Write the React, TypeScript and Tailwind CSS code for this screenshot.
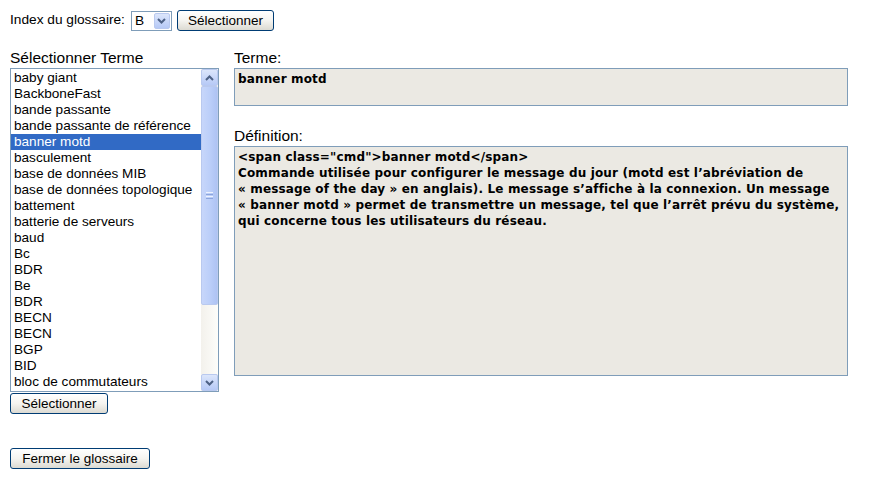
import React from "react";

const items = [
  "baby giant",
  "BackboneFast",
  "bande passante",
  "bande passante de référence",
  "banner motd",
  "basculement",
  "base de données MIB",
  "base de données topologique",
  "battement",
  "batterie de serveurs",
  "baud",
  "Bc",
  "BDR",
  "Be",
  "BDR",
  "BECN",
  "BECN",
  "BGP",
  "BID",
  "bloc de commutateurs",
];

function XpButton({ children, className = "" }: { children: React.ReactNode; className?: string }) {
  return (
    <button
      className={
        "h-[21px] rounded-[3px] border border-[#003c74] bg-gradient-to-b from-white via-[#f5f4f0] to-[#dcdad2] px-[10px] text-[13.5px] leading-none text-black " +
        className
      }
    >
      {children}
    </button>
  );
}

function Chevron({ up = false }: { up?: boolean }) {
  return (
    <svg width="9" height="6" viewBox="0 0 9 6" className={up ? "rotate-180" : ""}>
      <path d="M1 1 L4.5 4.5 L8 1" fill="none" stroke="#4d6185" strokeWidth="2" />
    </svg>
  );
}

export default function App() {
  return (
    <div
      className="w-[896px] h-[481px] bg-white text-black"
      style={{ fontFamily: '"Liberation Sans", Arial, sans-serif' }}
    >
      <div className="flex items-center pl-[10px] pt-[10px] text-[13.7px]">
        <span>Index du glossaire:</span>
        <div className="ml-[6px] flex h-[20px] w-[41px] items-center border border-[#7f9db9] bg-white">
          <span className="flex-1 pl-[3px] text-[13.7px] leading-none">B</span>
          <div className="mr-[1px] flex h-[16px] w-[16px] items-center justify-center rounded-[2px] border border-[#b9c9ef] bg-gradient-to-b from-[#dce6fb] to-[#b6c9f6]">
            <Chevron />
          </div>
        </div>
        <XpButton className="ml-[5px] w-[97px]">Sélectionner</XpButton>
      </div>

      <div className="mt-[19px] flex pl-[10px]">
        <div className="flex w-[209px] flex-col">
          <div className="h-[18px] whitespace-nowrap text-[15.5px] leading-[16px]">Sélectionner Terme</div>
          <div className="flex h-[324px] w-[209px] border border-[#7f9db9] bg-white">
            <div className="flex-1 pt-[1px]">
              {items.map((it, i) => (
                <div
                  key={i}
                  className={
                    "h-[16px] whitespace-nowrap pl-[3px] text-[13.6px] leading-[16px] " +
                    (i === 4 ? "bg-[#316ac5] text-white" : "")
                  }
                >
                  {it}
                </div>
              ))}
            </div>
            <div className="flex w-[17px] flex-col bg-[#f4f3ee]">
              <div className="flex h-[17px] items-center justify-center rounded-[2px] border border-[#b9c9ef] bg-gradient-to-b from-[#dce6fb] to-[#b6c9f6]">
                <Chevron up />
              </div>
              <div className="flex h-[219px] items-center justify-center rounded-[2px] border border-[#b9c9ef] bg-gradient-to-r from-[#c7d6fa] via-[#bccff9] to-[#aec3f3]">
                <div className="flex flex-col gap-[1px]">
                  <div className="h-[1px] w-[7px] bg-[#eef3fe]" />
                  <div className="h-[1px] w-[7px] bg-[#8ca5dd]" />
                  <div className="h-[1px] w-[7px] bg-[#eef3fe]" />
                  <div className="h-[1px] w-[7px] bg-[#8ca5dd]" />
                </div>
              </div>
              <div className="flex-1 bg-gradient-to-r from-[#f3f1ec] to-[#fdfdfa]" />
              <div className="flex h-[17px] items-center justify-center rounded-[2px] border border-[#b9c9ef] bg-gradient-to-b from-[#dce6fb] to-[#b6c9f6]">
                <Chevron />
              </div>
            </div>
          </div>
          <XpButton className="mt-[1px] w-[98px]">Sélectionner</XpButton>
          <XpButton className="mt-[34px] w-[140px]">Fermer le glossaire</XpButton>
        </div>

        <div className="ml-[15px] flex flex-col">
          <div className="h-[18px] text-[15.5px] leading-[16px]">Terme:</div>
          <div
            className="h-[38px] w-[614px] border border-[#7f9db9] bg-[#ebe9e3] px-[3px] pt-[2px] text-[12px] font-bold leading-[16px] tracking-[0.15px]"
            style={{ fontFamily: '"DejaVu Sans", Verdana, sans-serif' }}
          >
            banner motd
          </div>
          <div className="mt-[22px] h-[18px] text-[15.5px] leading-[16px]">Définition:</div>
          <div
            className="h-[230px] w-[614px] border border-[#7f9db9] bg-[#ebe9e3] px-[3px] pt-[2px] text-[12px] font-bold leading-[16px] tracking-[0.15px]"
            style={{ fontFamily: '"DejaVu Sans", Verdana, sans-serif' }}
          >
            {'<span class="cmd">banner motd</span>'}
            <br />
            Commande utilisée pour configurer le message du jour (motd est l’abréviation de
            <br />« message of the day » en anglais). Le message s’affiche à la connexion. Un message
            <br />« banner motd » permet de transmettre un message, tel que l’arrêt prévu du système,
            <br />
            qui concerne tous les utilisateurs du réseau.
          </div>
        </div>
      </div>
    </div>
  );
}
